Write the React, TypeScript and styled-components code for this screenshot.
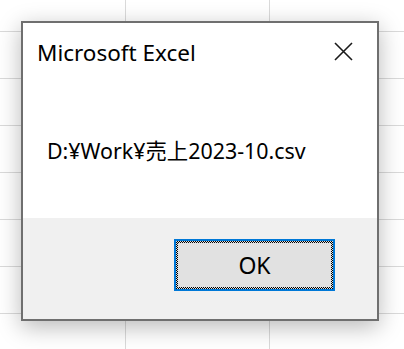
import React from 'react';
import styled, { createGlobalStyle } from 'styled-components';

const GlobalStyle = createGlobalStyle`
  html, body {
    margin: 0;
    padding: 0;
    background: #ffffff;
  }
  body {
    font-family: "Noto Sans", "Noto Sans CJK JP", sans-serif;
    color: #000;
  }
`;

const Sheet = styled.div`
  width: 404px;
  height: 349px;
  box-sizing: border-box;
  padding: 21px 0 0 21px;
  overflow: hidden;
  background-color: #ffffff;
  background-image:
    linear-gradient(to right, #dadada 1px, transparent 1px),
    linear-gradient(to bottom, #dadada 1px, transparent 1px);
  background-size: 144px 100%, 100% 47px;
  background-position: 125px 0, 0 31px;
`;

const Dialog = styled.div`
  width: 358px;
  height: 300px;
  box-sizing: border-box;
  border: 2px solid #6f6f6f;
  background: #ffffff;
  display: flex;
  flex-direction: column;
  box-shadow: 0 6px 22px rgba(0, 0, 0, 0.28);
`;

const TitleBar = styled.div`
  height: 56px;
  display: flex;
  align-items: center;
  justify-content: space-between;
  padding: 0 24px 0 14px;
`;

const Title = styled.span`
  font-size: 22.5px;
  line-height: 1;
  padding-top: 4px;
`;

const CloseButton = styled.button`
  width: 19px;
  height: 19px;
  padding: 0;
  border: none;
  background: none;
  display: flex;
  margin-top: 1px;
`;

const Body = styled.div`
  flex: 1;
  padding: 61px 0 0 24px;
  font-size: 21.4px;
  line-height: 1;
`;

const Footer = styled.div`
  height: 101px;
  box-sizing: border-box;
  background: #f0f0f0;
  display: flex;
  justify-content: flex-end;
  padding: 21px 42px 0 0;
`;

const OkButton = styled.button`
  width: 161px;
  height: 52px;
  box-sizing: border-box;
  border: 2px solid #0078d7;
  padding: 2px;
  display: flex;
  background: repeating-conic-gradient(#000 0 25%, #e1e1e1 0 50%) 0 0 / 2px 2px;
  font: inherit;
`;

const ButtonFace = styled.span`
  flex: 1;
  background: #e1e1e1;
  display: flex;
  align-items: center;
  justify-content: center;
  font-size: 23px;
  color: #000;
`;

export default function App() {
  return (
    <>
      <GlobalStyle />
      <Sheet>
        <Dialog>
          <TitleBar>
            <Title>Microsoft Excel</Title>
            <CloseButton aria-label="閉じる">
              <svg width="19" height="19" viewBox="0 0 19 19">
                <path d="M1 1 L18 18 M18 1 L1 18" stroke="#1a1a1a" strokeWidth="1.6" fill="none" />
              </svg>
            </CloseButton>
          </TitleBar>
          <Body>D:¥Work¥売上2023-10.csv</Body>
          <Footer>
            <OkButton>
              <ButtonFace>OK</ButtonFace>
            </OkButton>
          </Footer>
        </Dialog>
      </Sheet>
    </>
  );
}
